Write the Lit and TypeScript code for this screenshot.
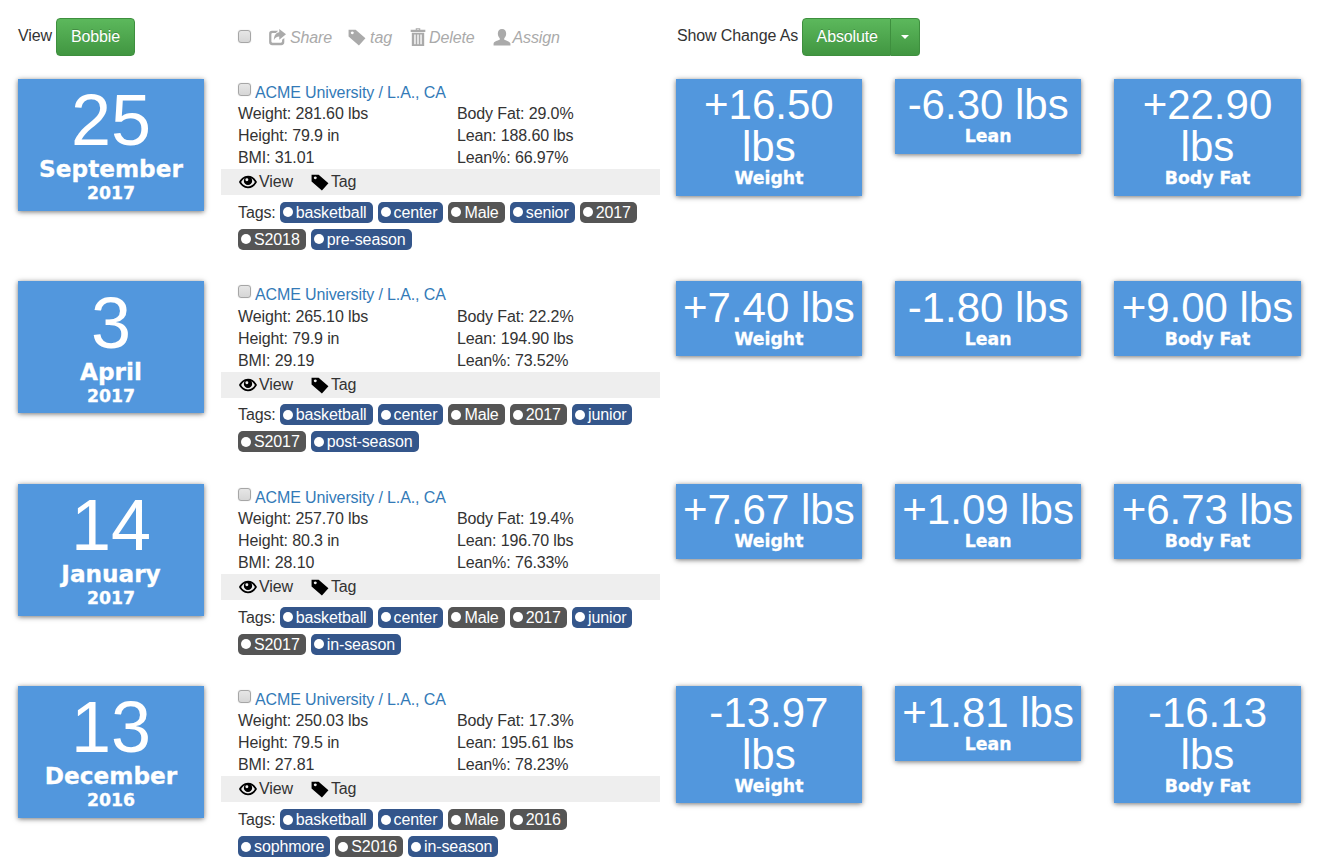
import { LitElement, html, css, svg } from "lit";
import { customElement } from "lit/decorators.js";

type Tag = [string, boolean];
interface Rec {
  day: string; month: string; year: string;
  w: string; h: string; bmi: string; bf: string; lean: string; leanp: string;
  tags: Tag[];
  dw: string; dl: string; df: string;
}
const b = (s: string): Tag => [s, true];
const g = (s: string): Tag => [s, false];

const RECS: Rec[] = [
  { day: "25", month: "September", year: "2017", w: "281.60 lbs", h: "79.9 in", bmi: "31.01", bf: "29.0%", lean: "188.60 lbs", leanp: "66.97%",
    tags: [b("basketball"), b("center"), g("Male"), b("senior"), g("2017"), g("S2018"), b("pre-season")], dw: "+16.50 lbs", dl: "-6.30 lbs", df: "+22.90 lbs" },
  { day: "3", month: "April", year: "2017", w: "265.10 lbs", h: "79.9 in", bmi: "29.19", bf: "22.2%", lean: "194.90 lbs", leanp: "73.52%",
    tags: [b("basketball"), b("center"), g("Male"), g("2017"), b("junior"), g("S2017"), b("post-season")], dw: "+7.40 lbs", dl: "-1.80 lbs", df: "+9.00 lbs" },
  { day: "14", month: "January", year: "2017", w: "257.70 lbs", h: "80.3 in", bmi: "28.10", bf: "19.4%", lean: "196.70 lbs", leanp: "76.33%",
    tags: [b("basketball"), b("center"), g("Male"), g("2017"), b("junior"), g("S2017"), b("in-season")], dw: "+7.67 lbs", dl: "+1.09 lbs", df: "+6.73 lbs" },
  { day: "13", month: "December", year: "2016", w: "250.03 lbs", h: "79.5 in", bmi: "27.81", bf: "17.3%", lean: "195.61 lbs", leanp: "78.23%",
    tags: [b("basketball"), b("center"), g("Male"), g("2016"), b("sophmore"), g("S2016"), b("in-season")], dw: "-13.97 lbs", dl: "+1.81 lbs", df: "-16.13 lbs" },
];

const icon = (body: unknown) => html`<svg class="ic" viewBox="0 0 16 16" fill="currentColor" aria-hidden="true">${body}</svg>`;
const shareI = svg`<path d="M10 .8 16 5.600 10 10.400V7.600C7.800 7.700 6.200 8.700 5.200 10.800 5.200 7 7 4.200 10 3.800z"/><path d="M3.500 2.500h5.500L7 4.500H4a1 1 0 0 0-1 1V12a1 1 0 0 0 1 1h7.500a1 1 0 0 0 1-1V10.500l2-1.600V12.500a2.800 2.800 0 0 1-2.800 2.800H3.800A2.800 2.800 0 0 1 1 12.500V5a2.500 2.500 0 0 1 2.500-2.500z"/>`;
const tagI = svg`<path fill-rule="evenodd" d="M.5 1.500h6.300l8.700 7.700-5.800 6.300L.5 7.500zM3.800 3a1.300 1.300 0 1 0 .01 0z"/>`;
const trashI = svg`<path d="M6 .3h4v1.300h4.500v2h-13v-2H6zM7 1v.6h2V1z"/><path fill-rule="evenodd" d="M2.500 4.300h11V16h-11zM4.700 5.800v8.700h1.200V5.800zm2.700 0v8.700h1.200V5.800zm2.700 0v8.700h1.200V5.800z"/>`;
const userI = svg`<path d="M8 .8c2.400 0 3.700 1.800 3.700 4.100 0 1.800-.7 3.300-1.700 4.200v1.400c2 .8 5.500 1.500 5.500 3.700v1.300H.5v-1.300c0-2.200 3.500-2.900 5.500-3.700V9.100C5 8.200 4.300 6.700 4.300 4.900 4.300 2.600 5.600.8 8 .8z"/>`;
const eyeI = svg`<path fill-rule="evenodd" d="M8 2.500c3.800 0 6.600 2.800 8 5.500-1.400 2.700-4.200 5.500-8 5.500S1.400 10.700 0 8c1.400-2.700 4.200-5.500 8-5.500zM1.900 8C3 10 5 12 8 12s5-2 6.100-4C13.400 6.700 12.300 5.500 11 4.700c.4.600.7 1.400.7 2.300a3.700 3.700 0 0 1-7.400 0c0-.9.300-1.700.7-2.300C3.700 5.500 2.600 6.700 1.900 8z"/><circle cx="7" cy="6" r="1.300" fill="#eee"/>`;

@customElement("app-root")
export class AppRoot extends LitElement {
  static styles = css`
    :host { display: block; font-family: "Liberation Sans", Arial, sans-serif; font-size: 16px; color: #333; line-height: 22px; width: 1318px; letter-spacing: -.12px; }
    .top { display: grid; grid-template-columns: 221px 439px 1fr; height: 79px; box-sizing: border-box; padding-top: 18px; }
    .t1 { display: flex; align-items: flex-start; padding-left: 18px; gap: 4px; }
    .t1 span { margin-top: 7px; }
    .btn { display: inline-block; height: 38px; box-sizing: border-box; padding: 7px 14px; line-height: 22px; color: #fff; font-size: 16px;
      background: linear-gradient(#5cb85c, #419641); border: 1px solid #3e8f3e; border-radius: 4px; text-shadow: 0 -1px 0 rgba(0,0,0,.2); }
    .t2 { display: flex; align-items: center; height: 40px; padding-left: 17px; color: #aaa; font-style: italic; }
    .t2 .ck { margin-top: -3px; }
    .t2 .ic { margin-top: -2px; width: 18px; height: 18px; }
    .t2 a { display: inline-flex; align-items: center; gap: 4px; }
    .t2 a.sh { margin-left: 17px; } .t2 a.tg { margin-left: 16px; } .t2 a.dl { margin-left: 17px; gap: 2px; } .t2 a.as { margin-left: 18px; gap: 2px; }
    .t3 { display: flex; align-items: flex-start; padding-left: 17px; gap: 4px; }
    .t3 span { margin-top: 7px; }
    .group { display: flex; }
    .group .a { border-radius: 4px 0 0 4px; padding: 7px 12.5px 7px 13.5px; }
    .group .c { border-radius: 0 4px 4px 0; border-left: 0; width: 29px; padding: 0; display: flex; align-items: center; justify-content: center; }
    .caret { width: 0; height: 0; border-left: 4px solid transparent; border-right: 4px solid transparent; border-top: 4px solid #fff; }
    .ck { appearance: none; margin: 0; width: 13px; height: 13px; box-sizing: border-box; border: 1px solid #a6a6a6; border-radius: 3px; background: linear-gradient(#e6e6e6, #d6d6d6); box-shadow: 0 0 1px rgba(0,0,0,.25); display: block; flex: none; }
    .ic { width: 16px; height: 16px; flex: none; display: block; }
    .rec { display: grid; grid-template-columns: 221px 439px 1fr; height: 202.4px; }
    .date { margin-left: 18px; width: 186px; height: 132px; box-sizing: border-box; }
    .box { background: #5297dd; color: #fff; text-align: center; box-shadow: 0 1px 5px rgba(0,0,0,.55); letter-spacing: 0; }
    .day { font-size: 72px; line-height: 72px; padding-top: 5.3px; }
    .mon { font-family: "DejaVu Sans", sans-serif; font-size: 23.2px; line-height: 26px; font-weight: 700; -webkit-text-stroke: .3px #fff; }
    .yr { font-family: "DejaVu Sans", sans-serif; font-size: 17.3px; line-height: 22px; font-weight: 700; -webkit-text-stroke: .3px #fff; }
    .mid { min-width: 0; }
    .link { padding-left: 17px; height: 24.3px; display: flex; color: #337ab7; gap: 4px; line-height: 28px; }
    .link .ck { margin-top: 4px; }
    .stats { display: grid; grid-template-columns: 219px 1fr; padding-left: 17px; }
    .strip { background: #eee; height: 26px; padding-left: 18px; display: flex; align-items: center; color: #222; }
    .strip a { display: inline-flex; align-items: center; gap: 2px; color: #333; }
    .strip .ic { color: #000; width: 18px; height: 18px; }
    .strip a + a { margin-left: 18px; }
    .tags { padding: 6.7px 0 0 17px; width: 406px; display: flex; flex-wrap: wrap; gap: 6px 5px; line-height: 21px; }
    .tags > span:first-child { margin-right: -1px; }
    .pill { display: inline-flex; align-items: center; height: 21px; padding: 0 6.1px 0 3px; border-radius: 5px; color: #fff; gap: 3px; }
    .pill i { width: 10px; height: 10px; border-radius: 50%; background: #fff; display: block; }
    .pill.b { background: #34568b; } .pill.g { background: #555; }
    .chg { display: grid; grid-template-columns: repeat(3, 186.6px); column-gap: 32.7px; padding-left: 15.6px; align-items: start; }
    .val { font-size: 42px; line-height: 42px; padding: 5.4px 2px 0; }
    .lab { font-family: "DejaVu Sans", sans-serif; font-size: 17.3px; line-height: 20px; font-weight: 700; -webkit-text-stroke: .3px #fff; padding-bottom: 7.6px; }
  `;

  private stat(rec: Rec) {
    return html`<div class="stats">
      <div>Weight: ${rec.w}</div><div>Body Fat: ${rec.bf}</div>
      <div>Height: ${rec.h}</div><div>Lean: ${rec.lean}</div>
      <div>BMI: ${rec.bmi}</div><div>Lean%: ${rec.leanp}</div>
    </div>`;
  }

  render() {
    return html`
      <div class="top">
        <div class="t1"><span>View</span><a class="btn">Bobbie</a></div>
        <div class="t2"><input class="ck" type="checkbox" />
          <a class="sh">${icon(shareI)}Share</a><a class="tg">${icon(tagI)}tag</a><a class="dl">${icon(trashI)}Delete</a><a class="as">${icon(userI)}Assign</a>
        </div>
        <div class="t3"><span>Show Change As</span><div class="group"><a class="btn a">Absolute</a><a class="btn c"><i class="caret"></i></a></div></div>
      </div>
      ${RECS.map((r) => html`<div class="rec">
        <div class="date box"><div class="day">${r.day}</div><div class="mon">${r.month}</div><div class="yr">${r.year}</div></div>
        <div class="mid">
          <div class="link"><input class="ck" type="checkbox" /><span>ACME University / L.A., CA</span></div>
          ${this.stat(r)}
          <div class="strip"><a>${icon(eyeI)}View</a><a>${icon(tagI)}Tag</a></div>
          <div class="tags"><span>Tags:</span>${r.tags.map(([t, blue]) => html`<span class="pill ${blue ? "b" : "g"}"><i></i>${t}</span>`)}</div>
        </div>
        <div class="chg">
          ${[[r.dw, "Weight"], [r.dl, "Lean"], [r.df, "Body Fat"]].map(([v, l]) => html`<div class="box"><div class="val">${v}</div><div class="lab">${l}</div></div>`)}
        </div>
      </div>`)}
    `;
  }
}
